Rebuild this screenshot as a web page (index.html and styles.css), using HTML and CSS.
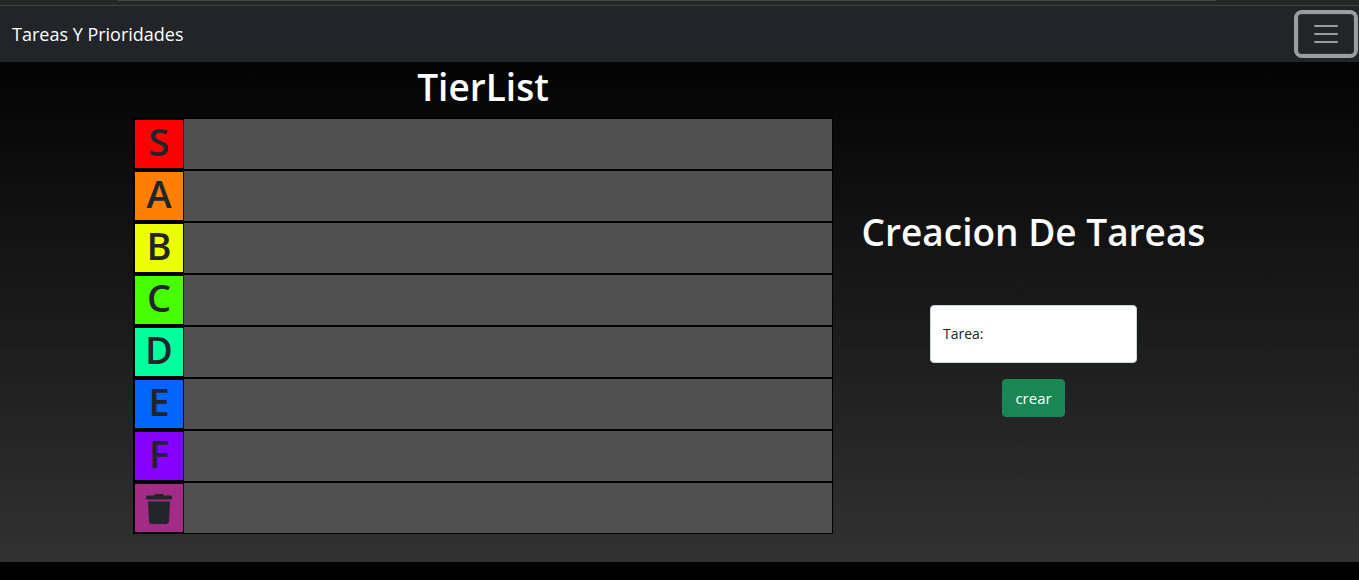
FILE: index.html
```html
<!DOCTYPE html>
<html lang="es">
<head>
  <meta charset="utf-8">
  <meta name="viewport" content="width=device-width, initial-scale=1">
  <title>Tareas Y Prioridades</title>
  <link rel="stylesheet" href="styles.css">
</head>
<body>
  <div class="topstrip"><div class="topstrip-bar"></div></div>
  <nav class="navbar">
    <a class="brand" href="#">Tareas Y Prioridades</a>
    <button class="toggler" type="button" aria-label="Abrir menú">
      <svg width="30" height="30" viewBox="0 0 30 30" aria-hidden="true"><path d="M4 7h22M4 15h22M4 23h22" stroke="currentColor" stroke-width="2" stroke-linecap="round" fill="none"/></svg>
    </button>
  </nav>
  <main class="page">
    <div class="content">
      <section class="tiers">
        <h1 class="title">TierList</h1>
        <div class="board">
          <div class="tier"><div class="rank rank-s">S</div></div>
          <div class="tier"><div class="rank rank-a">A</div></div>
          <div class="tier"><div class="rank rank-b">B</div></div>
          <div class="tier"><div class="rank rank-c">C</div></div>
          <div class="tier"><div class="rank rank-d">D</div></div>
          <div class="tier"><div class="rank rank-e">E</div></div>
          <div class="tier"><div class="rank rank-f">F</div></div>
          <div class="tier"><div class="rank rank-trash">
            <svg width="26" height="30" viewBox="0 0 26 30" role="img" aria-label="Papelera"><path fill="currentColor" d="M1.500 1.500H8C8.500.500 9 0 10 0h6c1 0 1.500.500 2 1.500h6.500A1.500 1.500 0 0 1 26 3v1.200A1.300 1.300 0 0 1 24.700 5.600H1.300A1.300 1.300 0 0 1 0 4.200V3A1.500 1.500 0 0 1 1.500 1.500ZM2 7.500h22l-1 20a2.600 2.600 0 0 1-2.600 2.500H5.600A2.600 2.600 0 0 1 3 27.500Z"/></svg>
          </div></div>
        </div>
      </section>
      <section class="create">
        <h1 class="title">Creacion De Tareas</h1>
        <form class="form">
          <div class="field">
            <input class="input" id="tarea" type="text">
            <label class="label" for="tarea">Tarea:</label>
          </div>
          <button class="submit" type="button">crear</button>
        </form>
      </section>
    </div>
  </main>
</body>
</html>
```

FILE: styles.css
```css
* {
  box-sizing: border-box;
}

body {
  margin: 0;
  background: #000;
  color: #212529;
  font: 15px/24px "Open Sans", "Noto Sans", sans-serif;
}

.topstrip {
  height: 6px;
  padding: 0 143px 0 118px;
  background: #262626;
  border-bottom: 1px solid #414243;
}

.topstrip-bar {
  height: 1px;
  background: #464646;
}

.navbar {
  display: flex;
  align-items: center;
  justify-content: space-between;
  padding: 8px 5px 8px 12px;
  background: #212529;
}

.brand {
  color: #fff;
  font-size: 18px;
  line-height: 30px;
  text-decoration: none;
}

.toggler {
  display: flex;
  align-items: center;
  justify-content: center;
  width: 56px;
  height: 40px;
  padding: 0;
  background: transparent;
  border: 1px solid #2f3336;
  border-radius: 4px;
  box-shadow: 0 0 0 4px #9b9d9f;
  color: #9b9d9f;
}

.page {
  min-height: 500px;
  background: linear-gradient(#030303, #313131);
}

.content {
  display: flex;
  max-width: 1141px;
  margin: 0 auto;
  padding: 0 16px 28px 24px;
}

.tiers {
  flex: 0 1 700px;
}

.title {
  margin: 0;
  color: #fff;
  font-size: 37px;
  font-weight: 600;
  line-height: 50px;
  text-align: center;
}

.board {
  margin-top: 6px;
}

.tier {
  height: 52px;
  background: #505050;
  border: 1px solid #000;
}

.rank {
  width: 50px;
  height: 50px;
  border: 1px solid #000;
  font-size: 38px;
  font-weight: 600;
  line-height: 42px;
  text-align: center;
}

.rank-s { background: #ff0000; }
.rank-a { background: #ff8000; }
.rank-b { background: #eeff00; }
.rank-c { background: #48ff00; }
.rank-d { background: #00ff9d; }
.rank-e { background: #0066ff; }
.rank-f { background: #8400ff; }

.rank-trash {
  display: flex;
  align-items: center;
  justify-content: center;
  padding-top: 2px;
  background: #a22b86;
}

.create {
  flex: 1;
  padding-top: 145px;
}

.form {
  display: flex;
  flex-direction: column;
  align-items: center;
  gap: 16px;
  margin-top: 48px;
}

.field {
  position: relative;
}

.input {
  display: block;
  width: 207px;
  height: 58px;
  padding: 16px 12px;
  background: #fff;
  border: 1px solid #ced4da;
  border-radius: 4px;
  font: inherit;
}

.label {
  position: absolute;
  top: 17px;
  left: 13px;
  font-size: 14px;
  pointer-events: none;
}

.submit {
  padding: 6px 12px;
  background: #198754;
  border: 1px solid #198754;
  border-radius: 4px;
  color: #fff;
  font: inherit;
}
```
